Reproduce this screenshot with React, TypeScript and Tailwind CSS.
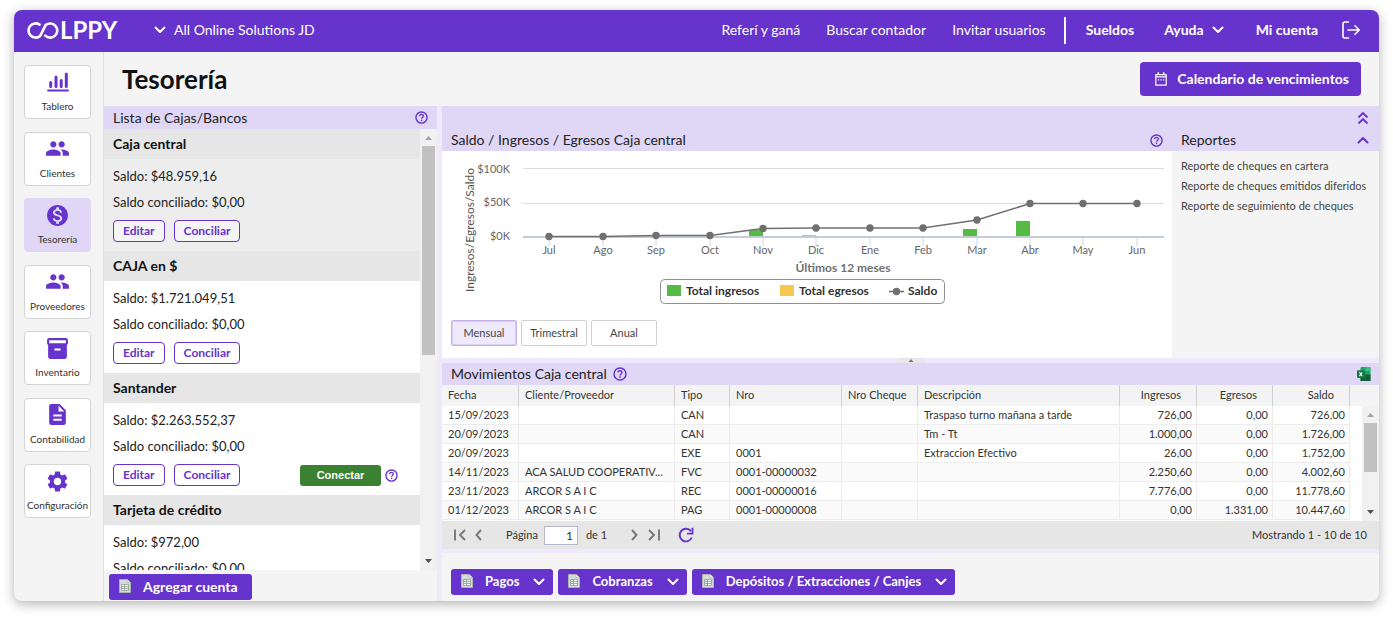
import type { ReactNode } from "react";
import {
  MdDescription,
  MdInventory2,
  MdMonetizationOn,
  MdPeople,
  MdSettings,
} from "react-icons/md";

function ChevronDown({ className = "" }: { className?: string }) {
  return (
    <svg viewBox="0 0 12 8" className={`h-2 w-3 shrink-0 ${className}`} aria-hidden="true">
      <path d="M1.5 1.5 6 6l4.5-4.5" fill="none" stroke="currentColor" strokeWidth="2" strokeLinecap="round" strokeLinejoin="round" />
    </svg>
  );
}

function HelpIcon({ className = "size-3" }: { className?: string }) {
  return (
    <svg viewBox="0 0 14 14" className={`shrink-0 text-[#6633cc] ${className}`} aria-hidden="true">
      <circle cx="7" cy="7" r="6" fill="none" stroke="currentColor" strokeWidth="1.5" />
      <path d="M5 5.6C5 4.4 5.9 3.7 7 3.7s2 .7 2 1.8c0 1.4-2 1.5-2 2.9" fill="none" stroke="currentColor" strokeWidth="1.4" />
      <rect x="6.3" y="9.3" width="1.5" height="1.5" fill="currentColor" />
    </svg>
  );
}

function HelpButton({ large = false }: { large?: boolean }) {
  return (
    <button type="button" aria-label="Ayuda" className="flex">
      <HelpIcon className={large ? "size-3.5" : "size-[13px]"} />
    </button>
  );
}

function Logo() {
  return (
    <svg viewBox="0 0 96 26" className="h-[26px] w-24" role="img" aria-label="Colppy">
      <path
        d="M13.600 7.600A7.100 7.100 0 1 0 14.200 18.900L19.600 8.100A7.100 7.100 0 1 1 19.200 18.600"
        fill="none"
        stroke="#fff"
        strokeWidth="2.6"
        strokeLinecap="round"
        strokeLinejoin="round"
      />
      <text x="34" y="22" fill="#fff" fontFamily="Lato, sans-serif" fontWeight="700" fontSize="24">
        LPPY
      </text>
    </svg>
  );
}

function BarsIcon() {
  return (
    <svg viewBox="0 0 22 20" className="h-5 w-[22px]" aria-hidden="true" stroke="currentColor" fill="none">
      <path d="M3.7 10.5v4M9 5v9.5M14.2 8.5v6M19.3 2v12.5" strokeWidth="3" strokeLinecap="round" />
      <path d="M1 18.5h20" strokeWidth="1.8" strokeLinecap="round" />
    </svg>
  );
}

function SheetIcon() {
  return (
    <svg viewBox="0 0 12 14" className="mb-0.5 h-3.5 w-3 shrink-0" aria-hidden="true">
      <path d="M.5.5h7.8l3.2 3v10H.5z" fill="#d3dcd6" stroke="#a9b5ae" />
      <path d="M8 .5v3.2h3.5" fill="#f6f8f6" stroke="#a9b5ae" strokeWidth="0.8" />
      <path d="M2.500 5.500h7v6h-7zM2.500 7.500h7M2.500 9.500h7M5.500 5.500v6" fill="#f6f8f6" stroke="#8d9e94" strokeWidth="0.800" />
    </svg>
  );
}

function CalendarIcon() {
  return (
    <svg viewBox="0 0 12 14" className="h-3.5 w-3 shrink-0" aria-hidden="true" fill="none" stroke="currentColor">
      <path d="M.8 2.600h10.400v10.600H.8z" strokeWidth="1.2" strokeLinejoin="round" />
      <path d="M1 4.800h10" strokeWidth="1.2" />
      <path d="M3.300.3v2M8.700.3v2" strokeWidth="1.500" />
      <path d="M2.800 7.800h1.300M5.300 7.800h1.300M7.900 7.800h1.300" strokeWidth="1.200" />
    </svg>
  );
}

function ExcelIcon() {
  return (
    <svg viewBox="0 0 14 14" className="size-3.5" aria-hidden="true">
      <rect x="3.5" y="0" width="10" height="14" rx="1" fill="#21a366" />
      <rect x="8.5" y="0" width="5" height="4" fill="#33c481" />
      <rect x="3.5" y="4" width="5" height="6" fill="#107c41" />
      <rect x="8.5" y="7.5" width="5" height="6.5" fill="#185c37" />
      <rect x="3.5" y="10" width="5" height="4" fill="#185c37" />
      <rect x="0" y="3.3" width="7.6" height="7.6" rx="0.8" fill="#107c41" />
      <path d="m2.4 5.2 2.8 3.9M5.2 5.2 2.4 9.1" stroke="#fff" strokeWidth="1.1" />
    </svg>
  );
}

type NavItem = { label: string; icon: ReactNode; active?: boolean };

const navItems: NavItem[] = [
  { label: "Tablero", icon: <BarsIcon /> },
  { label: "Clientes", icon: <MdPeople className="size-[25px]" /> },
  { label: "Tesorería", icon: <MdMonetizationOn className="size-[25px]" />, active: true },
  { label: "Proveedores", icon: <MdPeople className="size-[25px]" /> },
  { label: "Inventario", icon: <MdInventory2 className="size-[25px]" /> },
  { label: "Contabilidad", icon: <MdDescription className="size-[25px]" /> },
  { label: "Configuración", icon: <MdSettings className="size-[25px]" /> },
];

type Account = { name: string; saldo: string; selected?: boolean; connect?: boolean; card?: boolean };

const accounts: Account[] = [
  { name: "Caja central", saldo: "$48.959,16", selected: true },
  { name: "CAJA en $", saldo: "$1.721.049,51" },
  { name: "Santander", saldo: "$2.263.552,37", connect: true },
  { name: "Tarjeta de crédito", saldo: "$972,00", card: true },
];

const months = ["Jul", "Ago", "Sep", "Oct", "Nov", "Dic", "Ene", "Feb", "Mar", "Abr", "May", "Jun"];
const balanceY = [85.5, 85.5, 84.5, 84.5, 77.5, 77, 77, 77, 69, 52.5, 52.5, 52.5];
const incomeBars = [
  { month: 4, height: 6 },
  { month: 5, height: 1 },
  { month: 8, height: 7 },
  { month: 9, height: 15 },
];
const monthX = (i: number) => Math.round(107.4 + i * 53.4);

const movements = [
  ["15/09/2023", "", "CAN", "", "", "Traspaso turno mañana a tarde", "726,00", "0,00", "726,00"],
  ["20/09/2023", "", "CAN", "", "", "Tm - Tt", "1.000,00", "0,00", "1.726,00"],
  ["20/09/2023", "", "EXE", "0001", "", "Extraccion Efectivo", "26,00", "0,00", "1.752,00"],
  ["14/11/2023", "ACA SALUD COOPERATIV...", "FVC", "0001-00000032", "", "", "2.250,60", "0,00", "4.002,60"],
  ["23/11/2023", "ARCOR S A I C", "REC", "0001-00000016", "", "", "7.776,00", "0,00", "11.778,60"],
  ["01/12/2023", "ARCOR S A I C", "PAG", "0001-00000008", "", "", "0,00", "1.331,00", "10.447,60"],
];
const columns = ["Fecha", "Cliente/Proveedor", "Tipo", "Nro", "Nro Cheque", "Descripción", "Ingresos", "Egresos", "Saldo"];

function ScrollBar({ thumb }: { thumb: string }) {
  return (
    <div className="flex w-[17px] shrink-0 flex-col items-center bg-[#f1f1f1]" aria-hidden="true">
      <svg viewBox="0 0 17 17" className="size-[17px] shrink-0">
        <path d="M5 11h7L8.500 7z" fill="#a3a3a3" />
      </svg>
      <div className={`w-[13px] bg-[#c1c1c1] ${thumb}`} />
      <svg viewBox="0 0 17 17" className="mt-auto size-[17px] shrink-0">
        <path d="M5 6h7l-3.500 4z" fill="#505050" />
      </svg>
    </div>
  );
}

function Header() {
  return (
    <header className="flex h-[42px] shrink-0 items-center bg-[#6633cc] pr-[19px] pb-0.5 pl-3 text-sm text-white">
      <Logo />
      <button type="button" className="ml-8 flex items-center gap-2">
        <ChevronDown />
        All Online Solutions JD
      </button>
      <nav className="ml-auto flex items-center">
        <a href="#referi">Referí y ganá</a>
        <a href="#contador" className="ml-[26px]">Buscar contador</a>
        <a href="#invitar" className="ml-[26px]">Invitar usuarios</a>
        <span className="mr-5 ml-[18px] h-[27px] w-0.5 bg-white" />
        <a href="#sueldos" className="font-bold">Sueldos</a>
        <button type="button" className="ml-[30px] flex items-center gap-2 font-bold">
          Ayuda
          <ChevronDown />
        </button>
        <a href="#cuenta" className="ml-8 font-bold">Mi cuenta</a>
        <button type="button" aria-label="Salir" className="ml-6">
          <svg viewBox="0 0 18 18" className="size-[18px]" fill="none" stroke="currentColor" strokeWidth="1.6" strokeLinecap="round" strokeLinejoin="round">
            <path d="M6.500 1H3Q1 1 1 3v12q0 2 2 2h3.500M6 9h11M13 4.800 17.200 9 13 13.200" />
          </svg>
        </button>
      </nav>
    </header>
  );
}

function Sidebar() {
  return (
    <nav className="w-[90px] shrink-0 border-r border-[#e0e0e0] pt-[13px] pr-3 pl-2.5">
      <div className="flex h-[453px] flex-col justify-between">
        {navItems.map((item) => (
          <a
            key={item.label}
            href={`#${item.label}`}
            className={`flex h-[54px] flex-col items-center rounded border text-[10px] leading-[16px] whitespace-nowrap text-[#333] ${
              item.active ? "border-[#e0d7f6] bg-[#e0d7f6]" : "border-[#d4d4d4] bg-white"
            }`}
          >
            <span className="flex h-8 items-center text-[#6633cc]">{item.icon}</span>
            {item.label}
          </a>
        ))}
      </div>
    </nav>
  );
}

function OutlineButton({ children }: { children: ReactNode }) {
  return (
    <button type="button" className="h-[22px] rounded border border-[#6633cc] bg-white/40 px-[9px] text-xs leading-none font-bold text-[#6633cc]">
      {children}
    </button>
  );
}

function AccountsPanel() {
  return (
    <section className="flex w-[333px] shrink-0 flex-col text-[#222]">
      <div className="flex h-[23px] shrink-0 items-center justify-between bg-[#e0d7f6] px-[9px] text-sm">
        <h2>Lista de Cajas/Bancos</h2>
        <HelpButton />
      </div>
      <div className="flex min-h-0 flex-1">
        <ul className="min-w-0 flex-1 overflow-hidden bg-white">
          {accounts.map((a) => (
            <li key={a.name} className={a.selected ? "bg-[#ededed]" : ""}>
              <h3 className="h-[30px] bg-[#e6e6e6] px-[9px] text-sm leading-[30px] font-bold text-[#111]">{a.name}</h3>
              <div className="px-[9px] pt-1 pb-[9px] text-[13px] leading-[26px]">
                <p>Saldo: {a.saldo}</p>
                <p>Saldo conciliado: $0,00</p>
                {!a.card && (
                  <div className="mt-[5px] flex items-center gap-[9px]">
                    <OutlineButton>Editar</OutlineButton>
                    <OutlineButton>Conciliar</OutlineButton>
                    {a.connect && (
                      <div className="mr-[13px] ml-auto flex items-center gap-1">
                        <button type="button" className="h-[21px] w-[81px] rounded-[3px] bg-[#3a8232] font-['Liberation_Sans',sans-serif] text-[11px] leading-none font-bold text-white">
                          Conectar
                        </button>
                        <HelpButton />
                      </div>
                    )}
                  </div>
                )}
              </div>
            </li>
          ))}
        </ul>
        <ScrollBar thumb="h-[209px]" />
      </div>
      <div className="h-[31px] shrink-0 px-[5px] pt-1">
        <button type="button" className="flex h-[26px] items-center gap-3 rounded-[3px] bg-[#6633cc] pr-3.5 pl-2.5 text-sm font-bold text-white">
          <SheetIcon />
          Agregar cuenta
        </button>
      </div>
    </section>
  );
}

function Chart() {
  return (
    <svg viewBox="0 0 730 157" className="w-full" role="img" aria-label="Ingresos, egresos y saldo de los últimos 12 meses" fontFamily="Lato, sans-serif">
      <text transform="translate(32 79) rotate(-90)" textAnchor="middle" fontSize="12" fill="#555">
        Ingresos/Egresos/Saldo
      </text>
      <g fontSize="11" fill="#666" textAnchor="end">
        <text x="68" y="22">$100K</text>
        <text x="68" y="55">$50K</text>
        <text x="68" y="89">$0K</text>
      </g>
      <path d="M81 17.500H722M81 52.500H722" stroke="#dcdcdc" />
      <path d="M81 86H722" stroke="#c2cdd8" strokeWidth="2" />
      {incomeBars.map((b) => (
        <rect key={b.month} x={monthX(b.month) - 14} y={85 - b.height} width="14" height={b.height} fill={b.height > 1 ? "#55bb45" : "#9ad98f"} />
      ))}
      {months.map((m, i) => (
        <g key={m}>
          <path d={`M${monthX(i)} 87v8`} stroke="#ccd6eb" />
          <text x={monthX(i)} y="103" textAnchor="middle" fontSize="11" fill="#666">{m}</text>
        </g>
      ))}
      <polyline points={balanceY.map((y, i) => `${monthX(i)},${y}`).join(" ")} fill="none" stroke="#707070" strokeWidth="1.6" />
      {balanceY.map((y, i) => (
        <circle key={months[i]} cx={monthX(i)} cy={y} r="3.700" fill="#707070" />
      ))}
      <text x="401" y="121" textAnchor="middle" fontSize="12" fontWeight="700" fill="#707070">Últimos 12 meses</text>
      <rect x="218.500" y="128.500" width="284" height="24" rx="4" fill="#fff" stroke="#909090" />
      <rect x="225" y="134" width="14" height="11" fill="#55bb45" />
      <rect x="338" y="134" width="14" height="11" fill="#f7c84f" />
      <path d="M447 140.500h15" stroke="#707070" strokeWidth="1.600" />
      <circle cx="454.500" cy="140.500" r="3.700" fill="#707070" />
      <g fontSize="12" fontWeight="700" fill="#333">
        <text x="244" y="144">Total ingresos</text>
        <text x="357" y="144">Total egresos</text>
        <text x="466" y="144">Saldo</text>
      </g>
    </svg>
  );
}

function ChartPanel() {
  const tab = "h-[26px] rounded-[2px] border w-[66px] text-[11px] text-[#444]";
  return (
    <section className="min-w-0 flex-1">
      <div className="flex h-[22px] items-center justify-between bg-[#e0d7f6] px-[9px] text-sm text-[#222]">
        <h2>Saldo / Ingresos / Egresos Caja central</h2>
        <HelpButton />
      </div>
      <div className="bg-white pb-3">
        <Chart />
        <div className="mt-3 flex gap-1 px-[9px]">
          <button type="button" className={`${tab} border-[#c6b0f2] bg-[#efe9fc] ring-1 ring-[#c6b0f2]/50 ring-inset`}>Mensual</button>
          <button type="button" className={`${tab} border-[#d0d0d0] bg-white`}>Trimestral</button>
          <button type="button" className={`${tab} border-[#d0d0d0] bg-white`}>Anual</button>
        </div>
      </div>
    </section>
  );
}

function ReportsPanel() {
  return (
    <section className="w-[207px] shrink-0">
      <div className="flex h-[22px] items-center justify-between bg-[#e0d7f6] pr-2.5 pl-[9px] text-sm text-[#222]">
        <h2>Reportes</h2>
        <button type="button" aria-label="Contraer reportes" className="text-[#6633cc]">
          <ChevronDown className="rotate-180" />
        </button>
      </div>
      <ul className="pt-[5px] pl-[9px] text-[11px] leading-5 whitespace-nowrap text-[#444]">
        <li><a href="#cartera">Reporte de cheques en cartera</a></li>
        <li><a href="#diferidos">Reporte de cheques emitidos diferidos</a></li>
        <li><a href="#seguimiento">Reporte de seguimiento de cheques</a></li>
      </ul>
    </section>
  );
}

function PagerButton({ label, path, width = "w-[7px]", box = "0 0 7 12" }: { label: string; path: string; width?: string; box?: string }) {
  return (
    <button type="button" aria-label={label} className="text-[#777]">
      <svg viewBox={box} className={`h-3 ${width}`} fill="none" stroke="currentColor" strokeWidth="1.9">
        <path d={path} />
      </svg>
    </button>
  );
}

function MovementsPanel() {
  return (
    <section className="flex min-h-0 flex-1 flex-col">
      <div className="flex h-[22px] shrink-0 items-center bg-[#e0d7f6] pr-2 pl-[9px] text-sm text-[#222]">
        <h2 className="mr-1.5">Movimientos Caja central</h2>
        <HelpButton large />
        <button type="button" aria-label="Exportar a Excel" className="ml-auto">
          <ExcelIcon />
        </button>
      </div>
      <div className="relative min-h-0 flex-1 overflow-hidden bg-white">
        <table className="w-full table-fixed border-separate border-spacing-0 text-[11px] text-[#333]">
          <colgroup>
            <col className="w-[77px]" />
            <col className="w-[156px]" />
            <col className="w-[55px]" />
            <col className="w-[112px]" />
            <col className="w-[76px]" />
            <col />
            <col className="w-[77px]" />
            <col className="w-[76px]" />
            <col className="w-[77px]" />
            <col className="w-[29px]" />
          </colgroup>
          <thead>
            <tr className="bg-[#f4f4f4]">
              {columns.map((c, i) => (
                <th key={c} scope="col" className={`h-[21px] border-r border-[#d0d0d0] p-0 font-normal ${i > 5 ? "pr-[15px] text-right" : "pl-1.5 text-left"}`}>
                  {c}
                </th>
              ))}
              <td className="p-0" />
            </tr>
          </thead>
          <tbody>
            {movements.map((row, r) => (
              <tr key={r} className={r % 2 ? "bg-[#fafafa]" : "bg-white"}>
                {row.map((cell, i) => (
                  <td key={i} className={`h-[19px] truncate border-r border-b border-[#ededed] p-0 leading-[18px] ${i > 5 ? "pr-1 text-right" : "pr-2 pl-1.5"}`}>
                    {cell}
                  </td>
                ))}
                <td className="bg-white p-0" />
              </tr>
            ))}
          </tbody>
        </table>
        <div className="absolute top-[21px] right-0 bottom-0 flex">
          <ScrollBar thumb="h-[49px]" />
        </div>
      </div>
      <div className="flex h-7 shrink-0 items-center bg-[#e6e6e6] pr-3 pl-3 text-[11px] text-[#333]">
        <PagerButton label="Primera página" path="M1 .500v11M11 1 6 6l5 5" width="w-3" box="0 0 12 12" />
        <span className="w-[9px]" />
        <PagerButton label="Página anterior" path="M6 1 1.500 6 6 11" />
        <label className="ml-6 flex items-center gap-1.5">
          Página
          <input defaultValue="1" className="h-[19px] w-[34px] rounded-none border border-[#b5b8c8] bg-white px-1 text-right text-xs" />
        </label>
        <span className="mr-6 ml-2">de 1</span>
        <PagerButton label="Página siguiente" path="M1 1l4.500 5L1 11" />
        <span className="w-2.5" />
        <PagerButton label="Última página" path="M1 1l5 5-5 5M11 .500v11" width="w-3" box="0 0 12 12" />
        <button type="button" aria-label="Actualizar" className="ml-[18px] text-[#6633cc]">
          <svg viewBox="0 0 16 16" className="size-4" fill="none" stroke="currentColor" strokeWidth="1.900">
            <path d="M13.800 10.500A6.300 6.300 0 1 1 13 4.200" />
            <path d="M14.500.800v5.800H9" />
          </svg>
        </button>
        <span className="ml-auto">Mostrando 1 - 10 de 10</span>
      </div>
    </section>
  );
}

function MenuButton({ label }: { label: string }) {
  return (
    <button type="button" className="flex h-[26px] items-center rounded-[3px] bg-[#6633cc] pr-2 pl-2.5 text-[13px] font-bold text-white">
      <SheetIcon />
      <span className="mr-3.5 ml-3">{label}</span>
      <ChevronDown />
    </button>
  );
}

export default function App() {
  return (
    <div className="flex h-screen flex-col bg-white px-3.5 pt-2.5 pb-[18px] font-['Lato',sans-serif]">
      <div className="flex min-h-0 flex-1 flex-col overflow-hidden rounded-lg bg-[#f4f4f4] shadow-[0_3px_12px_rgba(0,0,0,0.3)]">
        <Header />
        <div className="flex min-h-0 flex-1">
          <Sidebar />
          <main className="flex min-w-0 flex-1 flex-col">
            <div className="flex h-[54px] shrink-0 items-center justify-between px-[18px]">
              <h1 className="text-[26px] font-bold text-[#111]">Tesorería</h1>
              <button type="button" className="flex h-[34px] items-center gap-2.5 rounded bg-[#6633cc] pr-3 pl-[15px] text-sm font-bold text-white">
                <CalendarIcon />
                Calendario de vencimientos
              </button>
            </div>
            <div className="flex min-h-0 flex-1">
              <AccountsPanel />
              <div className="w-[5px] shrink-0 bg-[#eeeafb]" />
              <div className="flex min-w-0 flex-1 flex-col">
                <div className="flex h-[23px] shrink-0 items-center justify-end bg-[#e0d7f6] pr-2.5">
                  <button type="button" aria-label="Contraer panel" className="text-[#6633cc]">
                    <svg viewBox="0 0 12 14" className="h-3.5 w-3" fill="none" stroke="currentColor" strokeWidth="1.800">
                      <path d="M1.500 6.500 6 2l4.500 4.500M1.500 12.500 6 8l4.500 4.500" />
                    </svg>
                  </button>
                </div>
                <div className="flex shrink-0">
                  <ChartPanel />
                  <ReportsPanel />
                </div>
                <div className="flex h-[5px] shrink-0 justify-center bg-[#eeeafb]">
                  <svg viewBox="0 0 30 5" className="h-[5px] w-[30px]" aria-hidden="true">
                    <path d="M0 5 4 .500h22L30 5z" fill="#e9e9ec" stroke="#dadada" strokeWidth="0.500" />
                    <path d="M12.500 4 15 1l2.500 3z" fill="#777" />
                  </svg>
                </div>
                <MovementsPanel />
                <div className="h-1 shrink-0 bg-[#eeeafb]" />
                <div className="flex h-12 shrink-0 items-start gap-[5px] px-[9px] pt-4">
                  <MenuButton label="Pagos" />
                  <MenuButton label="Cobranzas" />
                  <MenuButton label="Depósitos / Extracciones / Canjes" />
                </div>
              </div>
            </div>
          </main>
        </div>
      </div>
    </div>
  );
}
